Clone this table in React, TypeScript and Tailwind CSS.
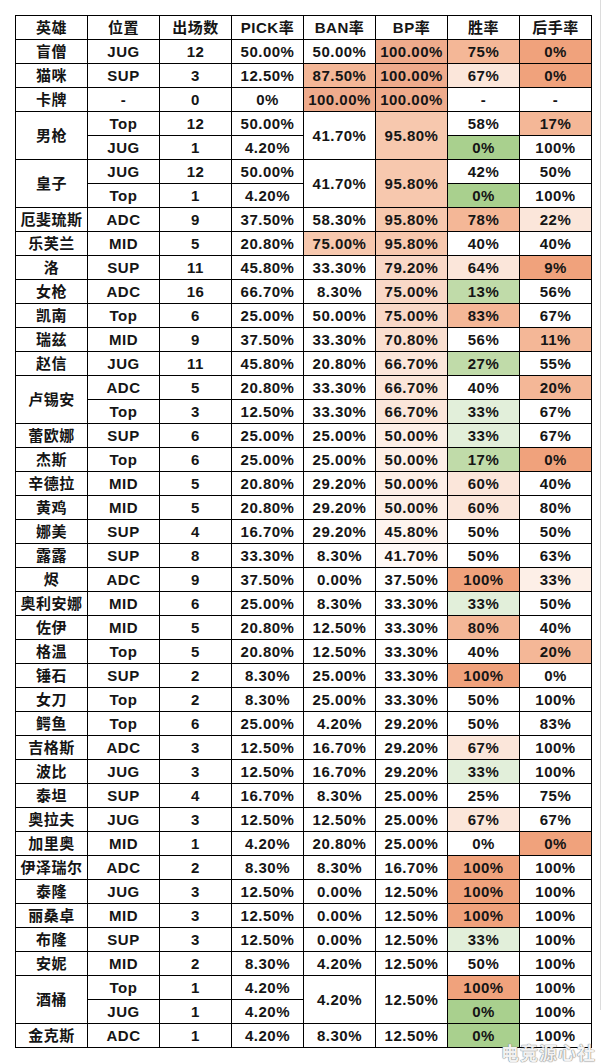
import React from "react";

type Cell = { t: string; bg?: string; rs?: number };

const O5 = "bg-[#f0a27c]";
const OB = "bg-[#efab8c]";
const O4 = "bg-[#f4b797]";
const O3 = "bg-[#f7c8ae]";
const O2 = "bg-[#f9d8c7]";
const O2b = "bg-[#fadfd0]";
const O1 = "bg-[#fbe6da]";
const O0 = "bg-[#fdefe7]";
const O00 = "bg-[#fef4ef]";
const O000 = "bg-[#fff9f6]";
const G3 = "bg-[#a9d08e]";
const G2 = "bg-[#c0dba9]";
const G1 = "bg-[#e2efda]";

const c = (t: string, bg?: string, rs?: number): Cell => ({ t, bg, rs });

const rows: Cell[][] = [
  [c("盲僧"), c("JUG"), c("12"), c("50.00%"), c("50.00%"), c("100.00%", OB), c("75%", O4), c("0%", O5)],
  [c("猫咪"), c("SUP"), c("3"), c("12.50%"), c("87.50%", O4), c("100.00%", OB), c("67%", O1), c("0%", O5)],
  [c("卡牌"), c("-"), c("0"), c("0%"), c("100.00%", OB), c("100.00%", OB), c("-"), c("-")],
  [c("男枪", undefined, 2), c("Top"), c("12"), c("50.00%"), c("41.70%", undefined, 2), c("95.80%", O3, 2), c("58%"), c("17%", O4)],
  [c("JUG"), c("1"), c("4.20%"), c("0%", G3), c("100%")],
  [c("皇子", undefined, 2), c("JUG"), c("12"), c("50.00%"), c("41.70%", undefined, 2), c("95.80%", O3, 2), c("42%"), c("50%")],
  [c("Top"), c("1"), c("4.20%"), c("0%", G3), c("100%")],
  [c("厄斐琉斯"), c("ADC"), c("9"), c("37.50%"), c("58.30%"), c("95.80%", O3), c("78%", O4), c("22%", O1)],
  [c("乐芙兰"), c("MID"), c("5"), c("20.80%"), c("75.00%", O3), c("95.80%", O3), c("40%"), c("40%")],
  [c("洛"), c("SUP"), c("11"), c("45.80%"), c("33.30%"), c("79.20%", O2), c("64%", O1), c("9%", O5)],
  [c("女枪"), c("ADC"), c("16"), c("66.70%"), c("8.30%"), c("75.00%", O2), c("13%", G2), c("56%")],
  [c("凯南"), c("Top"), c("6"), c("25.00%"), c("50.00%"), c("75.00%", O2), c("83%", O4), c("67%")],
  [c("瑞兹"), c("MID"), c("9"), c("37.50%"), c("33.30%"), c("70.80%", O2b), c("56%"), c("11%", O4)],
  [c("赵信"), c("JUG"), c("11"), c("45.80%"), c("20.80%"), c("66.70%", O1), c("27%", G2), c("55%")],
  [c("卢锡安", undefined, 2), c("ADC"), c("5"), c("20.80%"), c("33.30%"), c("66.70%", O1), c("40%"), c("20%", O4)],
  [c("Top"), c("3"), c("12.50%"), c("33.30%"), c("66.70%", O1), c("33%", G1), c("67%")],
  [c("蕾欧娜"), c("SUP"), c("6"), c("25.00%"), c("25.00%"), c("50.00%", O0), c("33%", G1), c("67%")],
  [c("杰斯"), c("Top"), c("6"), c("25.00%"), c("25.00%"), c("50.00%", O0), c("17%", G2), c("0%", O5)],
  [c("辛德拉"), c("MID"), c("5"), c("20.80%"), c("29.20%"), c("50.00%", O0), c("60%", O1), c("40%")],
  [c("黄鸡"), c("MID"), c("5"), c("20.80%"), c("29.20%"), c("50.00%", O0), c("60%", O1), c("80%")],
  [c("娜美"), c("SUP"), c("4"), c("16.70%"), c("29.20%"), c("45.80%", O00), c("50%"), c("50%")],
  [c("露露"), c("SUP"), c("8"), c("33.30%"), c("8.30%"), c("41.70%", O000), c("50%"), c("63%")],
  [c("烬"), c("ADC"), c("9"), c("37.50%"), c("0.00%"), c("37.50%"), c("100%", O5), c("33%", O0)],
  [c("奥利安娜"), c("MID"), c("6"), c("25.00%"), c("8.30%"), c("33.30%"), c("33%", G1), c("50%")],
  [c("佐伊"), c("MID"), c("5"), c("20.80%"), c("12.50%"), c("33.30%"), c("80%", O4), c("40%")],
  [c("格温"), c("Top"), c("5"), c("20.80%"), c("12.50%"), c("33.30%"), c("40%"), c("20%", O4)],
  [c("锤石"), c("SUP"), c("2"), c("8.30%"), c("25.00%"), c("33.30%"), c("100%", O5), c("0%")],
  [c("女刀"), c("Top"), c("2"), c("8.30%"), c("25.00%"), c("33.30%"), c("50%"), c("100%")],
  [c("鳄鱼"), c("Top"), c("6"), c("25.00%"), c("4.20%"), c("29.20%"), c("50%"), c("83%")],
  [c("吉格斯"), c("ADC"), c("3"), c("12.50%"), c("16.70%"), c("29.20%"), c("67%", O1), c("100%")],
  [c("波比"), c("JUG"), c("3"), c("12.50%"), c("16.70%"), c("29.20%"), c("33%", G1), c("100%")],
  [c("泰坦"), c("SUP"), c("4"), c("16.70%"), c("8.30%"), c("25.00%"), c("25%"), c("75%")],
  [c("奥拉夫"), c("JUG"), c("3"), c("12.50%"), c("12.50%"), c("25.00%"), c("67%", O1), c("67%")],
  [c("加里奥"), c("MID"), c("1"), c("4.20%"), c("20.80%"), c("25.00%"), c("0%"), c("0%", O5)],
  [c("伊泽瑞尔"), c("ADC"), c("2"), c("8.30%"), c("8.30%"), c("16.70%"), c("100%", O5), c("100%")],
  [c("泰隆"), c("JUG"), c("3"), c("12.50%"), c("0.00%"), c("12.50%"), c("100%", O5), c("100%")],
  [c("丽桑卓"), c("MID"), c("3"), c("12.50%"), c("0.00%"), c("12.50%"), c("100%", O5), c("100%")],
  [c("布隆"), c("SUP"), c("3"), c("12.50%"), c("0.00%"), c("12.50%"), c("33%", G1), c("100%")],
  [c("安妮"), c("MID"), c("2"), c("8.30%"), c("4.20%"), c("12.50%"), c("50%"), c("100%")],
  [c("酒桶", undefined, 2), c("Top"), c("1"), c("4.20%"), c("4.20%", undefined, 2), c("12.50%", undefined, 2), c("100%", O5), c("100%")],
  [c("JUG"), c("1"), c("4.20%"), c("0%", G3), c("100%")],
  [c("金克斯"), c("ADC"), c("1"), c("4.20%"), c("8.30%"), c("12.50%"), c("0%", G3), c("100%")],
];

const headers = ["英雄", "位置", "出场数", "PICK率", "BAN率", "BP率", "胜率", "后手率"];

export default function App() {
  return (
    <div
      className="relative w-[608px] h-[1063px] bg-white text-[#151515] overflow-hidden"
      style={{ fontFamily: '"Liberation Sans", "Noto Sans CJK SC", sans-serif' }}
    >
      <div className="pl-[15px] pt-[15px] w-[601px] h-[1010px] border-r border-[#dcdcdc]">
        <table className="table-fixed border-collapse w-[577px] text-[15px] font-bold tracking-[0.5px]">
          <colgroup>
            {headers.map((h) => (
              <col key={h} className="w-[72px]" />
            ))}
          </colgroup>
          <tbody>
            <tr className="h-[24px]">
              {headers.map((h) => (
                <td key={h} className="border border-black text-center p-0 leading-none">
                  {h}
                </td>
              ))}
            </tr>
            {rows.map((r, i) => (
              <tr key={i} className="h-[24px]">
                {r.map((cell, j) => (
                  <td
                    key={j}
                    rowSpan={cell.rs}
                    className={`border border-black text-center p-0 leading-none ${cell.bg ?? ""}`}
                  >
                    {cell.t}
                  </td>
                ))}
              </tr>
            ))}
          </tbody>
        </table>
      </div>
      <div className="absolute right-[12px] top-[1041px] text-[18px] font-bold tracking-[1px] text-[#f2f2f2] [text-shadow:0_0_1px_#777,0_0_1px_#777]">
        电竞源心社
      </div>
    </div>
  );
}
